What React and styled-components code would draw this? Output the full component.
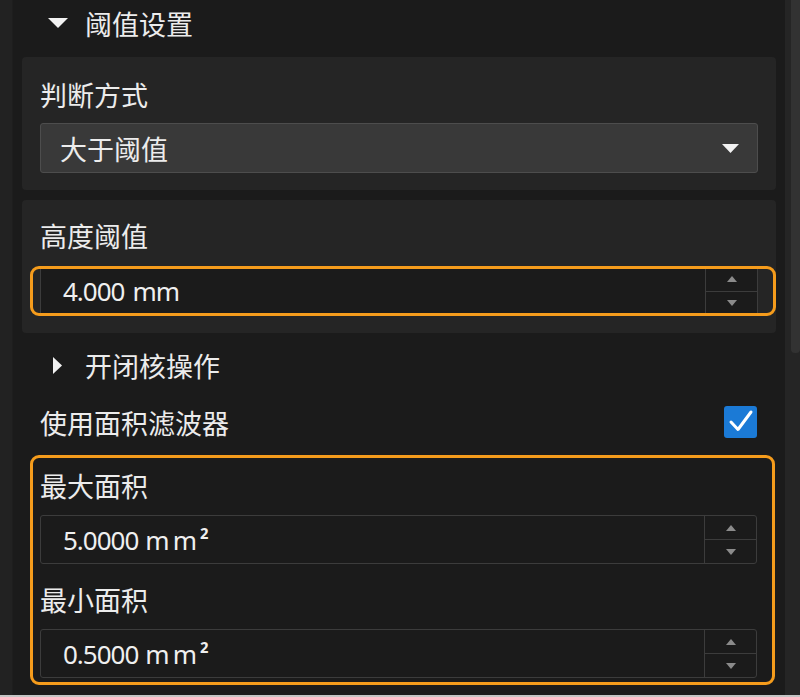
import React from "react";
import styled, { createGlobalStyle } from "styled-components";

const Global = createGlobalStyle`
  html, body { margin: 0; padding: 0; background: #1b1b1b; }
  * { box-sizing: border-box; }
  body {
    font-family: "Noto Sans", "Noto Sans CJK SC", sans-serif;
    color: #e6e6e6;
  }
`;

const Frame = styled.div`
  width: 800px;
  height: 697px;
  display: flex;
  flex-direction: column;
  overflow: hidden;
  background: #1b1b1b;
`;

const Body = styled.div`
  flex: 1;
  display: flex;
  min-height: 0;
`;

const BottomEdge = styled.div`
  height: 2px;
  background: #c4c4c4;
`;

const LeftStrip = styled.div`
  width: 13px;
  background: #222222;
  border-right: 1px solid #1e1e1e;
`;

const Main = styled.div`
  flex: 1;
  display: flex;
  flex-direction: column;
  padding: 0 9px;
`;

const Track = styled.div`
  width: 15px;
  background: #252525;
  display: flex;
  justify-content: flex-end;
`;

const Thumb = styled.div`
  width: 9px;
  height: 353px;
  background: #323232;
  border-radius: 0 0 4px 4px;
`;

const CJK = `"Noto Sans CJK SC", sans-serif`;

const Header = styled.div`
  height: 50px;
  margin-bottom: 7px;
  padding-bottom: 4px;
  display: flex;
  align-items: center;
  padding-left: 26px;
  gap: 17px;
  font-size: 27px;
  font-family: ${CJK};
  color: #ececec;
`;

const SectionRow = styled.div`
  height: 50px;
  margin-top: 7px;
  display: flex;
  align-items: center;
  padding-left: 31px;
  gap: 23px;
  font-size: 27px;
  font-family: ${CJK};
  color: #ececec;
`;

const Card = styled.div`
  background: #252525;
  border-radius: 4px;
  padding: ${(p) => p.$pt}px 18px 17px 18px;
  display: flex;
  flex-direction: column;
  gap: ${(p) => p.$gap}px;
  margin-top: ${(p) => p.$mt || 0}px;
`;

const Label = styled.div`
  height: 36px;
  line-height: 36px;
  font-size: 27px;
  font-family: ${CJK};
  color: #ececec;
`;

const Select = styled.div`
  height: 50px;
  background: #393939;
  border: 1px solid #4d4d4d;
  border-radius: 3px;
  display: flex;
  align-items: center;
  justify-content: space-between;
  padding: 0 18px 0 19px;
  font-size: 27px;
  font-family: ${CJK};
  color: #ececec;
`;

const Highlight = styled.div`
  position: relative;
  display: flex;
  flex-direction: column;
  padding: ${(p) => p.$pad || "0"};
  &::after {
    content: "";
    position: absolute;
    top: 0;
    bottom: 0;
    left: -10px;
    right: -18px;
    border: 3px solid #f59c1c;
    border-radius: 9px;
    pointer-events: none;
  }
`;

const Spacer = styled.div`
  height: ${(p) => p.$h}px;
  flex-shrink: 0;
`;

const NumBox = styled.div`
  height: ${(p) => p.$h || 50}px;
  border: 1px solid #3c3c3c;
  border-radius: 3px;
  background: #1b1b1b;
  display: flex;
  align-items: stretch;
`;

const NumText = styled.div`
  flex: 1;
  display: flex;
  align-items: center;
  padding-left: 22px;
  font-size: 26px;
  letter-spacing: -1px;
  font-family: "Noto Sans", sans-serif;
  color: #efefef;
`;

const Unit = styled.span`
  margin-left: ${(p) => p.$ml}px;
  letter-spacing: ${(p) => p.$ls}px;
`;

const Sup = styled.span`
  font-size: 24px;
  font-weight: 600;
  letter-spacing: 0;
`;

const Spin = styled.div`
  width: 52px;
  border-left: 1px solid #3c3c3c;
  display: flex;
  flex-direction: column;
`;

const SpinBtn = styled.div`
  flex: 1;
  display: flex;
  align-items: center;
  justify-content: center;
  & + & {
    border-top: 1px solid #3c3c3c;
  }
`;

const CheckRow = styled.div`
  height: 40px;
  margin-top: 12px;
  display: flex;
  align-items: center;
  justify-content: space-between;
  padding: 0 19px 0 18px;
  font-size: 27px;
  font-family: ${CJK};
  color: #ececec;
`;

const CheckBox = styled.div`
  width: 33px;
  height: 32px;
  border-radius: 3px;
  background: #1b7ad6;
  display: flex;
  align-items: center;
  justify-content: center;
`;

const Group = styled.div`
  margin: 13px 19px 0 18px;
`;

const Tri = ({ dir, w, h, color = "#f2f2f2" }) => {
  const pts =
    dir === "down"
      ? `0,0 ${w},0 ${w / 2},${h}`
      : dir === "up"
      ? `0,${h} ${w},${h} ${w / 2},0`
      : `0,0 ${w},${h / 2} 0,${h}`;
  return (
    <svg width={w} height={h} viewBox={`0 0 ${w} ${h}`}>
      <polygon points={pts} fill={color} />
    </svg>
  );
};

const NumberField = ({ value, unit, sup, ml, ls, h }) => (
  <NumBox $h={h}>
    <NumText>
      {value}
      <Unit $ml={ml} $ls={ls}>{unit}</Unit>
      {sup && <Sup>{sup}</Sup>}
    </NumText>
    <Spin>
      <SpinBtn>
        <Tri dir="up" w={10} h={6} color="#8b8b8b" />
      </SpinBtn>
      <SpinBtn>
        <Tri dir="down" w={10} h={6} color="#8b8b8b" />
      </SpinBtn>
    </Spin>
  </NumBox>
);

export default function App() {
  return (
    <>
      <Global />
      <Frame>
        <Body>
          <LeftStrip />
          <Main>
            <Header>
              <Tri dir="down" w={20} h={10} />
              <span>阈值设置</span>
            </Header>
            <Card $pt={20} $gap={10}>
              <Label>判断方式</Label>
              <Select>
                <span>大于阈值</span>
                <Tri dir="down" w={17} h={9} />
              </Select>
            </Card>
            <Card $pt={18} $gap={12} $mt={10}>
              <Label>高度阈值</Label>
              <Highlight>
                <NumberField value="4.000" unit="mm" ml={8} ls={-1} />
              </Highlight>
            </Card>
            <SectionRow>
              <Tri dir="right" w={9} h={17} />
              <span>开闭核操作</span>
            </SectionRow>
            <CheckRow>
              <span>使用面积滤波器</span>
              <CheckBox>
                <svg width="33" height="32" viewBox="0 0 33 32">
                  <path
                    d="M7 16 L14 23.5 L27 6"
                    fill="none"
                    stroke="#ffffff"
                    strokeWidth="3"
                    strokeLinecap="round"
                    strokeLinejoin="round"
                  />
                </svg>
              </CheckBox>
            </CheckRow>
            <Group>
              <Highlight $pad="13px 0 7px 0">
                <Label>最大面积</Label>
                <Spacer $h={11} />
                <NumberField value="5.0000" unit="mm" sup="²" ml={7} ls={3} h={49} />
                <Spacer $h={18} />
                <Label>最小面积</Label>
                <Spacer $h={11} />
                <NumberField value="0.5000" unit="mm" sup="²" ml={7} ls={3} h={49} />
              </Highlight>
            </Group>
          </Main>
          <Track>
            <Thumb />
          </Track>
        </Body>
        <BottomEdge />
      </Frame>
    </>
  );
}
